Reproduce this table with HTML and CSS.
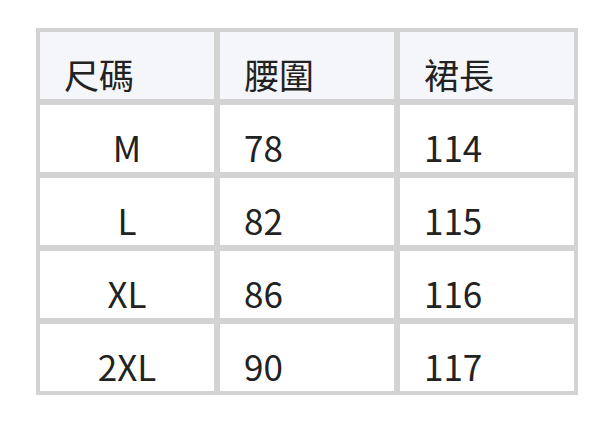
FILE: index.html
```html
<!DOCTYPE html>
<html lang="zh-Hant">
<head>
<meta charset="utf-8">
<title>尺碼表</title>
<link rel="stylesheet" href="styles.css">
</head>
<body>
<div class="size-table">
  <div class="cell head">尺碼</div>
  <div class="cell head">腰圍</div>
  <div class="cell head">裙長</div>

  <div class="cell center">M</div>
  <div class="cell">78</div>
  <div class="cell">114</div>

  <div class="cell center">L</div>
  <div class="cell">82</div>
  <div class="cell">115</div>

  <div class="cell center">XL</div>
  <div class="cell">86</div>
  <div class="cell">116</div>

  <div class="cell center">2XL</div>
  <div class="cell">90</div>
  <div class="cell">117</div>
</div>
</body>
</html>
```
FILE: styles.css
```css
html, body {
  margin: 0;
  padding: 0;
  background: #ffffff;
}
body {
  padding: 28px 0 0 36px;
  font-family: "Noto Sans CJK TC", "Noto Sans", sans-serif;
  color: #222222;
}
.size-table {
  width: 542px;
  box-sizing: border-box;
  display: grid;
  grid-template-columns: 1fr 1fr 1fr;
  grid-auto-rows: 67px;
  gap: 6px;
  padding: 4px;
  background: #d3d3d3;
}
.cell {
  background: #ffffff;
  display: flex;
  align-items: flex-end;
  padding: 0 22px 5px 24px;
  font-size: 35px;
  line-height: 40px;
}
.cell.head {
  background: #f5f6fa;
}
.cell.center {
  justify-content: center;
  padding-left: 0;
  padding-right: 0;
}
```
